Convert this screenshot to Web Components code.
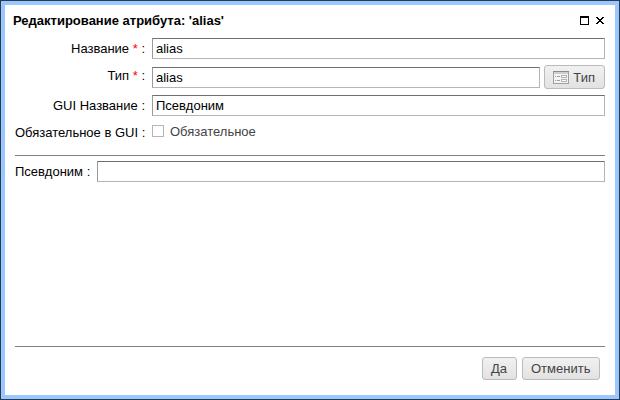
<!DOCTYPE html>
<html lang="ru">
<head>
<meta charset="utf-8">
<title>Редактирование атрибута</title>
<style>
html, body { margin: 0; height: 100%; overflow: hidden; }
body { font: 13px/15px "Liberation Sans", Arial, sans-serif; color: #000; }
</style>
</head>
<body>
<attr-dialog heading="Редактирование атрибута: 'alias'">
  <attr-row label="Название" required style="margin-top:7px"><text-field value="alias"></text-field></attr-row>
  <attr-row label="Тип" required style="margin-top:8px;--label-top:1px"><text-field value="alias"></text-field><push-button class="type"><list-icon></list-icon>Тип</push-button></attr-row>
  <attr-row label="GUI Название" style="margin-top:7px"><text-field value="Псевдоним"></text-field></attr-row>
  <attr-row label="Обязательное в GUI" style="margin-top:6px"><check-box>Обязательное</check-box></attr-row>
  <rule-line style="margin-top:12px"></rule-line>
  <attr-row label="Псевдоним" style="margin-top:5px;--label-width:77px"><text-field></text-field></attr-row>
  <rule-line slot="footer"></rule-line>
  <push-button slot="actions">Да</push-button>
  <push-button slot="actions">Отменить</push-button>
</attr-dialog>
<script>
const define = (name, html, setup) => {
  const template = document.createElement('template');
  template.innerHTML = html;
  customElements.define(name, class extends HTMLElement {
    constructor() {
      super();
      this.attachShadow({ mode: 'open' }).append(template.content.cloneNode(true));
    }
    connectedCallback() { if (setup) setup(this, this.shadowRoot); }
  });
};

define('list-icon', `
<style>:host{display:block;width:16px;height:13px} svg{display:block}</style>
<svg width="16" height="13" viewBox="0 0 16 13" shape-rendering="crispEdges">
  <rect x=".5" y=".5" width="15" height="12" fill="#f4f4f4" stroke="#a0a0a0"/>
  <path d="M1 1h14v2H1z" fill="#cfcfcf"/><path d="M0 0h16v1H0z" fill="#8c8c8c"/>
  <path d="M2 5h1v1H2zM4 5h3v1H4zM2 9h1v1H2zM4 9h3v1H4z" fill="#a0a0a0"/>
  <path d="M8 4h6v3H8zM8 8h6v3H8z" fill="#b4b4b4"/>
  <path d="M9 5h4v1H9zM9 9h4v1H9z" fill="#fff"/>
</svg>`);

define('window-tools', `
<style>:host{display:flex;gap:7px;align-items:flex-start} svg{display:block}.close{margin-top:1px}</style>
<svg width="9" height="9" shape-rendering="crispEdges"><path d="M0 0h9v9H0zM1 2v6h7V2z" fill="#000" fill-rule="evenodd"/></svg>
<svg class="close" width="8" height="7" shape-rendering="crispEdges"><path d="M0 0h2v1H0zM6 0h2v1H6zM1 1h2v1H1zM5 1h2v1H5zM2 2h4v1H2zM3 3h2v1H3zM2 4h4v1H2zM1 5h2v1H1zM5 5h2v1H5zM0 6h2v1H0zM6 6h2v1H6z"/></svg>`);

define('rule-line', `<style>:host{display:block;height:1px;background:#808080}</style>`);

define('text-field', `
<style>
:host{display:block;flex:1;min-width:0;height:21px;box-sizing:border-box;border:1px solid #b5b5b5;border-top-color:#707070;border-left-color:#999;background:#fff;padding:2px 3px;line-height:15px}
</style><span></span>`, (el, root) => { root.querySelector('span').textContent = el.getAttribute('value') || ''; });

define('check-box', `
<style>:host{display:flex;color:#444;height:21px}i{width:12px;height:12px;box-sizing:border-box;border:1px solid #b5b5b5;margin:3px 6px 0 0}span{margin-top:2px}</style>
<i></i><span><slot></slot></span>`);

define('push-button', `
<style>
:host{display:flex;align-items:center;box-sizing:border-box;height:23px;padding:0 8.5px 0 8px;border:1px solid #bbb;border-radius:3px;background:linear-gradient(#f1f1f1,#e2e2e2);color:#444;white-space:nowrap}
:host(.type){height:24px;padding:0 9px 0 8px;gap:4px;margin:-2px 0 -1px 4px}
</style><slot></slot>`);

define('attr-row', `
<style>
:host{display:flex;align-items:flex-start}
label{box-sizing:border-box;width:var(--label-width,132px);padding:var(--label-top,3px) 2px 0 0;margin-right:5px;text-align:right;flex:none;white-space:pre}
b{font-weight:normal;color:red}
</style><label><span></span><b></b> :</label><slot></slot>`, (el, root) => {
  root.querySelector('span').textContent = el.getAttribute('label');
  root.querySelector('b').textContent = el.hasAttribute('required') ? ' *' : '';
});

define('attr-dialog', `
<style>
:host{display:flex;flex-direction:column;box-sizing:border-box;width:620px;height:400px;border:1px solid #2e3a4b;padding:4px;background:#99c7ff}
main{flex:1;display:flex;flex-direction:column;background:#fff;padding:0 10px}
header{display:flex;justify-content:space-between;height:26px;margin-left:-2px}
h1{font-size:13px;line-height:15px;margin:8px 0 0}
window-tools{margin:11px 1px 0 0}
section{flex:1}
footer{display:grid;grid-template-columns:35px 78px;justify-content:end;gap:5px;padding:10px 5px 15px 0}
</style>
<main>
<header><h1></h1><window-tools></window-tools></header>
<section><slot></slot></section>
<slot name="footer"></slot>
<footer><slot name="actions"></slot></footer>
</main>`, (el, root) => { root.querySelector('h1').textContent = el.getAttribute('heading'); });
</script>
</body>
</html>
